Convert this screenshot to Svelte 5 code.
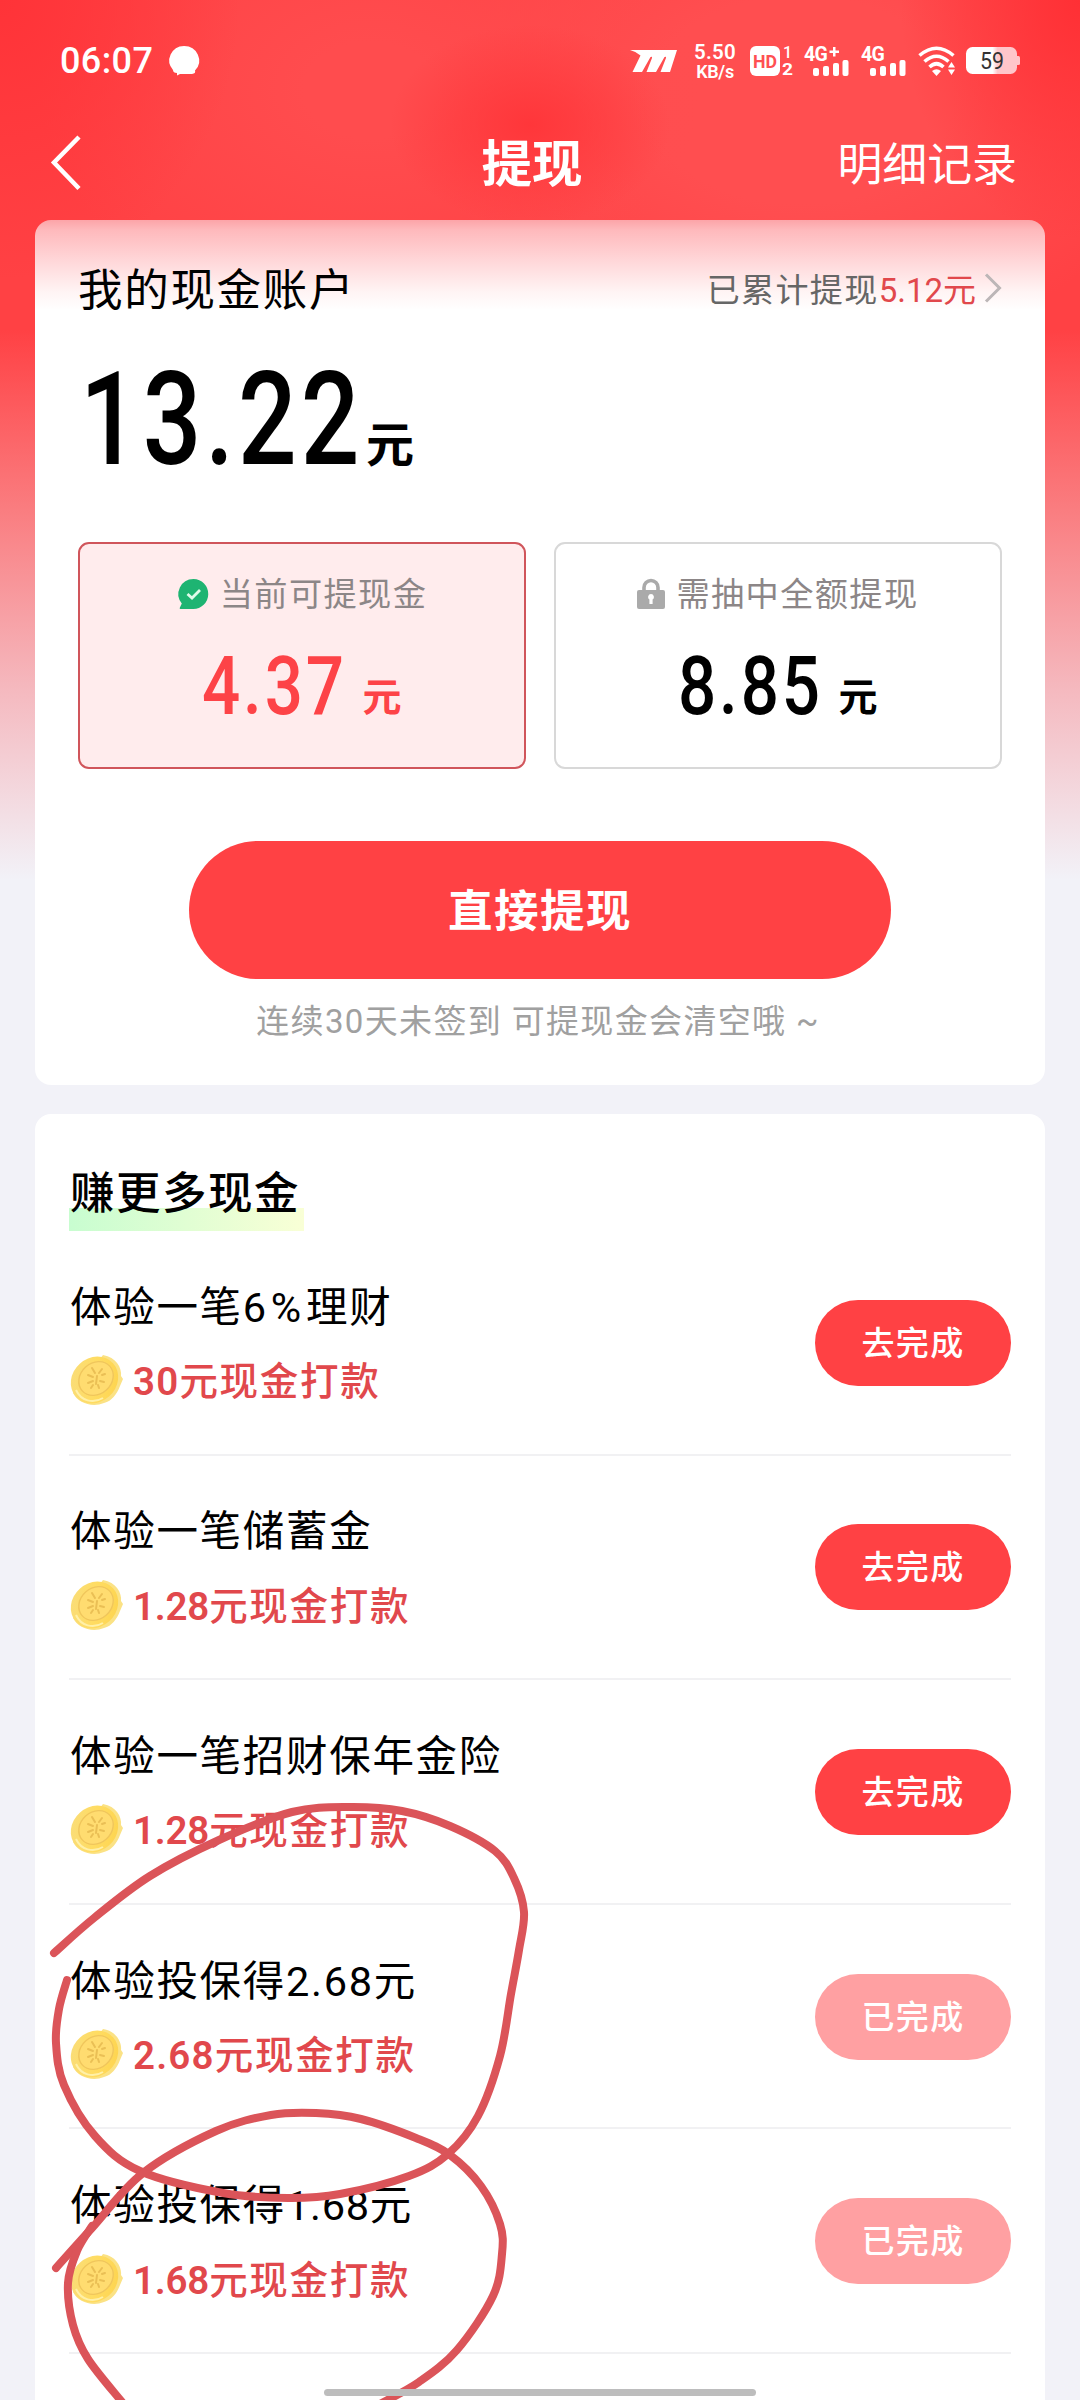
<script lang="ts">
   type Task = { title: string; amount: string; done: boolean };
   type Point = [number, number];

   const tasks: Task[] = [
      { title: '体验一笔6%理财', amount: '30', done: false },
      { title: '体验一笔储蓄金', amount: '1.28', done: false },
      { title: '体验一笔招财保年金险', amount: '1.28', done: false },
      { title: '体验投保得2.68元', amount: '2.68', done: true },
      { title: '体验投保得1.68元', amount: '1.68', done: true },
   ];

   // freehand marker strokes
   const strokes: Point[][] = [
      [
         [54, 1953], [94, 1918], [150, 1876], [219, 1840], [292, 1812], [350, 1807], [402, 1811],
         [450, 1826], [495, 1851], [514, 1878], [524, 1912], [519, 1950], [511, 1994], [500, 2056],
         [478, 2116], [448, 2154], [409, 2176], [340, 2194], [288, 2198], [223, 2193], [140, 2171],
         [95, 2136], [64, 2085], [56, 2043], [59, 2009], [67, 1980],
      ],
      [
         [56, 2268], [92, 2228], [143, 2173], [216, 2131], [271, 2115], [316, 2113], [361, 2119],
         [416, 2138], [450, 2155], [481, 2186], [500, 2224], [502, 2254], [493, 2296], [457, 2350],
         [419, 2382], [380, 2404],
      ],
      [[92, 2226], [77, 2251], [68, 2283], [73, 2325], [88, 2359], [122, 2402]],
   ];

   // Catmull-Rom through the points, as cubic beziers
   function smooth(pts: Point[]) {
      let d = `M${pts[0][0]} ${pts[0][1]}`;
      for (let i = 0; i < pts.length - 1; i++) {
         const a = pts[i - 1] || pts[i];
         const b = pts[i];
         const c = pts[i + 1];
         const e = pts[i + 2] || c;
         d += ` C${b[0] + (c[0] - a[0]) / 6} ${b[1] + (c[1] - a[1]) / 6}`;
         d += ` ${c[0] - (e[0] - b[0]) / 6} ${c[1] - (e[1] - b[1]) / 6} ${c[0]} ${c[1]}`;
      }
      return d;
   }

   // cjk text, numbers and signs go in separate spans so that each can be spaced
   function parts(title: string) {
      return title.match(/[\d.]+|%|[^\d.%]+/g) || [];
   }
</script>

{#snippet signal(label: string, plus: boolean)}
   <svg class="signal" width="46" height="32" viewBox="0 0 46 32">
      <text x="0" y="16" font-size="19.500" font-weight="700" letter-spacing="-0.800">{label}</text>
      {#if plus}
         <path d="M25.500 5.500h3.500V2h2.500v3.500H35V8h-3.500v3.500H29V8h-3.500z" />
      {/if}
      <rect x="9" y="23" width="6" height="8" rx="2" />
      <rect x="19" y="21" width="6" height="10" rx="2" />
      <rect x="29" y="18" width="6" height="13" rx="2" />
      <rect x="38.500" y="15" width="6" height="16" rx="2" />
   </svg>
{/snippet}

<div class="page">
   <div class="status">
      <span class="time">06:07</span>
      <svg class="bubble" width="30" height="30" viewBox="0 0 30 30">
         <path d="M15 0a15 14.500 0 0 1 11 24.500q1 3-3 3.500H11l-3 1.500V27q-4 0-4-3A15 14.500 0 0 1 15 0z" />
      </svg>
      <div class="indicators">
         <svg class="mlogo" width="47" height="22" viewBox="0 0 47 22">
            <path d="M0 0H47L40 22H30.500L36 8Q36.500 6 34.500 7L26 22H16.500L22 8Q22.500 6 20.500 7L12 22H2.500L10.500 5.500Q6 1.500 0 0z" />
         </svg>
         <div class="speed">
            <span>5.50</span>
            <span class="unit">KB/s</span>
         </div>
         <svg class="hd" width="43" height="32" viewBox="0 0 43 32">
            <rect x="0" y="1" width="30" height="30" rx="6" />
            <text class="cut" x="3" y="23" font-size="19" font-weight="700" textLength="24" lengthAdjust="spacingAndGlyphs">HD</text>
            <text x="33" y="13" font-size="16" font-weight="500">1</text>
            <text x="32" y="30" font-size="16" font-weight="700" textLength="11" lengthAdjust="spacingAndGlyphs">2</text>
         </svg>
         {@render signal('4G', true)}
         {@render signal('4G', false)}
         <svg class="wifi" width="38" height="30" viewBox="0 0 38 30">
            <g fill="none" stroke="#fff" stroke-width="3.600">
               <path d="M1.500 9.500Q18.500-5 35.500 9.500" />
               <path d="M6.500 15.500Q18.500 5 30.500 15.500" />
               <path d="M11.500 21Q18.500 14.500 25.500 21" />
            </g>
            <path d="M14 25Q18.500 21.500 23 25L18.500 30z" />
            <path d="M33.500 16L37 21.500H30zM33.500 29L37 23.500H30z" />
         </svg>
         <svg class="battery" width="54" height="28" viewBox="0 0 54 28">
            <defs>
               <linearGradient id="charge">
                  <stop offset="0.52" stop-color="#fff" />
                  <stop offset="0.62" stop-color="#ffc6ca" />
               </linearGradient>
            </defs>
            <rect width="51" height="27" rx="6.500" fill="url(#charge)" />
            <path d="M51 9h1.500q1.500 0 1.500 1.500v6q0 1.500-1.500 1.500H51z" fill="#ffc6ca" />
            <text class="level" x="26" y="22" font-size="23" text-anchor="middle" textLength="24" lengthAdjust="spacingAndGlyphs">59</text>
         </svg>
      </div>
   </div>

   <header>
      <svg class="back" width="32" height="56" viewBox="0 0 32 56">
         <path d="M28 2L3 27.500L28 53.500" fill="none" stroke="#fff" stroke-width="4.500" />
      </svg>
      <h1>提现</h1>
      <span class="records">明细记录</span>
   </header>

   <section class="card account">
      <div class="account-head">
         <span class="account-title">我的现金账户</span>
         <span class="total">
            已累计提现<em>5.12元</em>
            <svg width="18" height="30" viewBox="0 0 18 30">
               <path d="M2 1.500L15.500 15L2 28.500" fill="none" stroke="#bcb6b7" stroke-width="3" />
            </svg>
         </span>
      </div>
      <div class="balance"><b>13.22</b><span>元</span></div>

      <div class="boxes">
         <div class="box active">
            <div class="label">
               <svg width="32" height="32" viewBox="0 0 32 32">
                  <path d="M16.500 1A15 15 0 1 1 16 31H3.500q-1.200 0-.7-1.200L4.800 25.500A15 15 0 0 1 16.500 1z" fill="#1eb472" />
                  <path d="M10.500 16L15 20L23 12" fill="none" stroke="#dffbea" stroke-width="2.800" />
               </svg>
               <span>当前可提现金</span>
            </div>
            <div class="amount"><b>4.37</b><span>元</span></div>
         </div>
         <div class="box">
            <div class="label">
               <svg class="lock" width="28" height="32" viewBox="0 0 28 32">
                  <path d="M7 13V9.500a7 7 0 0 1 14 0V13" fill="none" stroke="#aaa" stroke-width="3.600" />
                  <rect y="12" width="28" height="19" rx="2" fill="#aaa" />
                  <path d="M14 16a3 3 0 0 1 1.600 5.500V26h-3.200V21.500A3 3 0 0 1 14 16z" fill="#fff" />
               </svg>
               <span>需抽中全额提现</span>
            </div>
            <div class="amount"><b>8.85</b><span>元</span></div>
         </div>
      </div>

      <button class="withdraw">直接提现</button>
      <p class="hint">连续30天未签到 可提现金会清空哦 ~</p>
   </section>

   <section class="card earn">
      <h2>赚更多现金</h2>
      <ul>
         {#each tasks as task}
            <li>
               <div class="info">
                  <div class="title">
                     {#each parts(task.title) as part}<span
                           class:percent={part === '%'}
                           class:slim={part.startsWith('1')}>{part}</span
                        >{/each}
                  </div>
                  <div class="reward">
                     <svg width="54" height="52" viewBox="0 0 54 52">
                        <defs>
                           <linearGradient id="gold" x1="0" y1="0" x2="1" y2="1">
                              <stop offset="0" stop-color="#f8dd80" />
                              <stop offset="0.5" stop-color="#ffdc62" />
                              <stop offset="1" stop-color="#fdd24a" />
                           </linearGradient>
                        </defs>
                        <path d="M33 1C46 3 52 14 51 22L53 25L50 32C47 40 42 47 34 49C22 54 8 49 3 39z" fill="#fbe285" />
                        <ellipse cx="24.500" cy="26" rx="25" ry="22" transform="rotate(-42 24.500 26)" fill="url(#gold)" />
                        <ellipse cx="26" cy="24.500" rx="18.500" ry="15.500" transform="rotate(-42 26 24.500)" fill="#ffdc70" stroke="#f0c65c" stroke-width="1.400" />
                        <path d="M22 14l3 5M32 15l-3 4M18 21l5 2M27 22l-1 8M18 29l5-2M30 27l4 1M21 34l2-3M29 34l-1-3M32 21l3-1" fill="none" stroke="#eabf55" stroke-width="2" stroke-linecap="round" />
                        <path d="M6 36C11 47 23 50 33 44" fill="none" stroke="#fff0a8" stroke-width="2" />
                     </svg>
                     <span>
                        <b class:narrow={task.amount.startsWith('1')}>{task.amount}</b>元现金打款
                     </span>
                  </div>
               </div>
               <button class="go" class:done={task.done}>{task.done ? '已完成' : '去完成'}</button>
            </li>
         {/each}
      </ul>
   </section>

   <svg class="marks" width="1080" height="2400" viewBox="0 0 1080 2400">
      {#each strokes as pts}
         <path d={smooth(pts)} />
      {/each}
   </svg>
   <div class="home-bar"></div>
</div>

<style>
   :global(body) {
      margin: 0;
   }
   .page {
      position: relative;
      width: 1080px;
      height: 2400px;
      overflow: hidden;
      font-family: Roboto, 'Noto Sans CJK SC', sans-serif;
      color: #000;
      background:
         radial-gradient(ellipse 140px 100px at 530px 125px, rgba(255, 52, 56, 0.9) 0%, rgba(255, 52, 56, 0) 100%),
         radial-gradient(ellipse 240px 280px at 0 0, #ff3338 0%, rgba(255, 51, 56, 0) 100%),
         radial-gradient(ellipse 180px 240px at 1080px 0, #ff3035 0%, rgba(255, 48, 53, 0) 100%),
         radial-gradient(ellipse 330px 240px at 370px 90px, #ff4c4e 20%, rgba(255, 76, 78, 0) 100%),
         radial-gradient(ellipse 380px 260px at 800px 100px, #ff4e50 40%, rgba(255, 78, 80, 0) 100%),
         linear-gradient(#ff4144 0, #ff4144 330px, #fa7d80 510px, #f5b9bf 690px, #f2f2f8 880px);
   }
   h1,
   h2,
   p,
   ul {
      margin: 0;
      padding: 0;
      font-weight: 500;
   }
   svg {
      display: block;
      flex: none;
      overflow: visible;
   }
   button {
      display: flex;
      align-items: center;
      justify-content: center;
      border: none;
      padding: 0;
      box-sizing: border-box;
      font-family: inherit;
      font-weight: 500;
      color: #fff;
      background: #ff4144;
   }

   .status {
      display: flex;
      align-items: center;
      height: 122px;
      padding: 0 60px;
      fill: #fff;
      color: #fff;
   }
   .time {
      font-size: 36px;
      font-weight: 500;
      letter-spacing: 0.4px;
      width: 109px;
   }
   .indicators {
      display: flex;
      align-items: center;
      margin-left: auto;
   }
   .mlogo {
      margin-right: 17px;
   }
   .speed {
      display: flex;
      flex-direction: column;
      align-items: center;
      width: 42px;
      margin-right: 14px;
      font-size: 20.5px;
      font-weight: 600;
      line-height: 20px;
      letter-spacing: 0.2px;
   }
   .unit {
      font-size: 18px;
      line-height: 19px;
      letter-spacing: -0.3px;
   }
   .hd {
      margin-right: 11px;
   }
   .cut {
      fill: #ff5052;
   }
   .signal {
      margin-right: 11px;
   }
   .wifi {
      margin-right: 10px;
   }
   .level {
      fill: #333;
   }

   header {
      display: grid;
      grid-template-columns: 1fr auto 1fr;
      align-items: center;
      height: 98px;
      padding: 0 63px 16px 51px;
      box-sizing: border-box;
      color: #fff;
   }
   h1 {
      font-size: 50.5px;
      line-height: 60px;
      font-weight: 700;
      padding-top: 4px;
      padding-right: 4px;
   }
   .records {
      justify-self: end;
      padding-top: 6px;
      font-size: 44.9px;
      line-height: 60px;
   }

   .card {
      width: 1010px;
      margin: 0 auto;
      box-sizing: border-box;
      border-radius: 16px;
      background: #fff;
   }
   .account {
      height: 865px;
      padding: 0 43px;
      background: linear-gradient(#fca4a8 0, #feb9bc 10px, #ffd6d8 40px, #fff4f4 72px, #fff 90px);
   }
   .account-head {
      display: flex;
      align-items: center;
      justify-content: space-between;
      height: 138px;
   }
   .account-title {
      padding-bottom: 5px;
      font-size: 44.5px;
      letter-spacing: 1.7px;
   }
   .total {
      display: flex;
      align-items: center;
      padding-bottom: 2px;
      font-size: 33px;
      letter-spacing: 1.4px;
      color: #666;
   }
   .total em {
      font-style: normal;
      letter-spacing: 0;
      color: #e1484c;
      margin-right: 8px;
   }
   .balance {
      display: flex;
      align-items: baseline;
      height: 184px;
      padding: 2px 0 0 2px;
      box-sizing: border-box;
      line-height: 120px;
   }
   .balance b {
      width: 286px;
      font-size: 129px;
      font-weight: 500;
      letter-spacing: 5px;
      white-space: nowrap;
      transform: scaleX(0.8);
      transform-origin: left;
   }
   .balance span {
      position: relative;
      top: -2px;
      font-size: 48px;
      font-weight: 700;
   }

   .boxes {
      display: grid;
      grid-template-columns: 448px 448px;
      justify-content: space-between;
   }
   .box {
      height: 227px;
      box-sizing: border-box;
      border: 2px solid #d8d8d8;
      border-radius: 11px;
      padding-top: 26px;
   }
   .active {
      border-color: #d0555b;
      background: #ffeced;
   }
   .label {
      display: flex;
      align-items: center;
      justify-content: center;
      gap: 11px;
      height: 48px;
      font-size: 33.2px;
      letter-spacing: 1.4px;
      color: #8c8687;
   }
   .label span {
      padding-bottom: 5px;
   }
   .amount {
      display: flex;
      align-items: baseline;
      justify-content: center;
      gap: 22px;
      margin-top: 28px;
      line-height: 80px;
   }
   .amount b {
      width: 138px;
      font-size: 82px;
      font-weight: 500;
      letter-spacing: 3.5px;
      white-space: nowrap;
      transform: scaleX(0.82);
      transform-origin: left;
   }
   .amount span {
      position: relative;
      top: -3px;
      font-size: 39px;
      font-weight: 700;
   }
   .active .amount {
      color: #fd4347;
   }
   .withdraw {
      width: 702px;
      height: 138px;
      margin: 72px auto 0;
      padding-bottom: 5px;
      border-radius: 69px;
      font-size: 44.5px;
      font-weight: 700;
      letter-spacing: 1.5px;
   }
   .hint {
      margin-top: 21px;
      padding-right: 4px;
      font-size: 33px;
      font-weight: 400;
      line-height: 44px;
      letter-spacing: 1.35px;
      text-align: center;
      color: #a0a0a0;
   }

   .earn {
      height: 1400px;
      margin-top: 29px;
      padding: 44px 34px 0;
   }
   h2 {
      width: 235px;
      height: 73px;
      padding-left: 1px;
      box-sizing: border-box;
      font-size: 44.5px;
      line-height: 72px;
      letter-spacing: 1.5px;
      white-space: nowrap;
      background: linear-gradient(90deg, #c8fdd0, #f9ffd6) bottom / 100% 23px no-repeat;
   }
   ul {
      list-style: none;
   }
   li {
      display: flex;
      align-items: center;
      justify-content: space-between;
      height: 224.6px;
      box-sizing: border-box;
      border-bottom: 2px solid #f1f1f3;
   }
   .info {
      padding-top: 14px;
   }
   .title {
      padding-left: 1px;
      font-size: 41.5px;
      font-weight: 400;
      line-height: 62px;
      letter-spacing: 1.7px;
   }
   .percent {
      padding: 0 3px;
   }
   .slim {
      letter-spacing: 0.7px;
   }
   .reward {
      display: flex;
      align-items: center;
      gap: 9px;
      height: 83px;
      padding-left: 1px;
      font-size: 38.5px;
      font-weight: 500;
      letter-spacing: 1.7px;
      color: #e1484c;
   }
   .reward span {
      padding-bottom: 4px;
   }
   .reward b {
      font-weight: 600;
      letter-spacing: 1.2px;
   }
   .reward .narrow {
      letter-spacing: -0.2px;
   }
   .go {
      width: 196px;
      height: 86px;
      margin-top: 1px;
      padding-bottom: 4px;
      border-radius: 43px;
      font-size: 33px;
      letter-spacing: 1.4px;
   }
   .done {
      background: #ffa0a2;
   }

   .marks {
      position: absolute;
      left: 0;
      top: 0;
      fill: none;
      stroke: #db5459;
      stroke-width: 8;
      stroke-linecap: round;
      stroke-linejoin: round;
      pointer-events: none;
   }
   .home-bar {
      position: absolute;
      left: 324px;
      bottom: 4px;
      width: 432px;
      height: 7px;
      border-radius: 4px;
      background: #bdbdbd;
   }
</style>
